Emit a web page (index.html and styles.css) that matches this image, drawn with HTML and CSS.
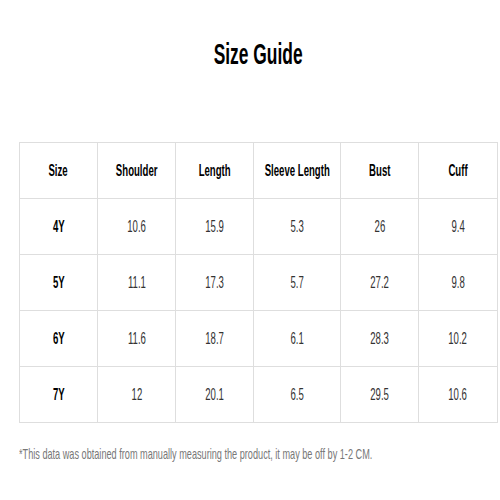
FILE: index.html
```html
<!DOCTYPE html>
<html>
<head>
<meta charset="utf-8">
<link rel="stylesheet" href="styles.css">
</head>
<body>
<div class="page">
  <h1 class="title"><span class="sq">Size Guide</span></h1>
  <table class="grid">
    <colgroup>
      <col class="c78"><col class="c78"><col class="c78"><col class="c87"><col class="c78"><col class="c79">
    </colgroup>
    <tr class="head">
      <th><span class="sq">Size</span></th>
      <th><span class="sq">Shoulder</span></th>
      <th><span class="sq">Length</span></th>
      <th><span class="sq">Sleeve Length</span></th>
      <th><span class="sq">Bust</span></th>
      <th><span class="sq">Cuff</span></th>
    </tr>
    <tr>
      <th><span class="sq">4Y</span></th>
      <td><span class="sq">10.6</span></td>
      <td><span class="sq">15.9</span></td>
      <td><span class="sq">5.3</span></td>
      <td><span class="sq">26</span></td>
      <td><span class="sq">9.4</span></td>
    </tr>
    <tr>
      <th><span class="sq">5Y</span></th>
      <td><span class="sq">11.1</span></td>
      <td><span class="sq">17.3</span></td>
      <td><span class="sq">5.7</span></td>
      <td><span class="sq">27.2</span></td>
      <td><span class="sq">9.8</span></td>
    </tr>
    <tr>
      <th><span class="sq">6Y</span></th>
      <td><span class="sq">11.6</span></td>
      <td><span class="sq">18.7</span></td>
      <td><span class="sq">6.1</span></td>
      <td><span class="sq">28.3</span></td>
      <td><span class="sq">10.2</span></td>
    </tr>
    <tr>
      <th><span class="sq">7Y</span></th>
      <td><span class="sq">12</span></td>
      <td><span class="sq">20.1</span></td>
      <td><span class="sq">6.5</span></td>
      <td><span class="sq">29.5</span></td>
      <td><span class="sq">10.6</span></td>
    </tr>
  </table>
  <p class="note"><span class="sqn">*This data was obtained from manually measuring the product, it may be off by 1-2 CM.</span></p>
</div>
</body>
</html>
```
FILE: styles.css
```css
html, body {
  margin: 0;
  padding: 0;
  background: #fff;
}
body {
  font-family: "Liberation Sans", Arial, sans-serif;
  color: #111;
}
.page {
  width: 478px;
  padding: 0 0 0 19px;
}
.sq {
  display: inline-block;
  transform: scaleX(0.6);
  white-space: nowrap;
  margin: 0 -60px;
}
.sqn {
  display: inline-block;
  transform: scaleX(0.61);
  transform-origin: left center;
  white-space: nowrap;
}
.title {
  margin: 0;
  height: 142px;
  box-sizing: border-box;
  padding-top: 36px;
  text-align: center;
  font-size: 29px;
  line-height: 36px;
  font-weight: bold;
  color: #000;
}
.grid {
  border-collapse: collapse;
  table-layout: fixed;
  width: 478px;
}
.c78 { width: 78px; }
.c87 { width: 87px; }
.c79 { width: 79px; }
.grid th, .grid td {
  border: 1px solid #dedede;
  height: 55px;
  padding: 0;
  text-align: center;
  vertical-align: middle;
  font-size: 16px;
  line-height: 18px;
}
.grid th {
  font-weight: bold;
  color: #000;
}
.grid td {
  font-weight: normal;
  color: #333;
}
.note {
  margin: 22px 0 0 0;
  width: 478px;
  overflow: hidden;
  font-size: 15px;
  line-height: 18px;
  color: #777;
  white-space: nowrap;
}
```
